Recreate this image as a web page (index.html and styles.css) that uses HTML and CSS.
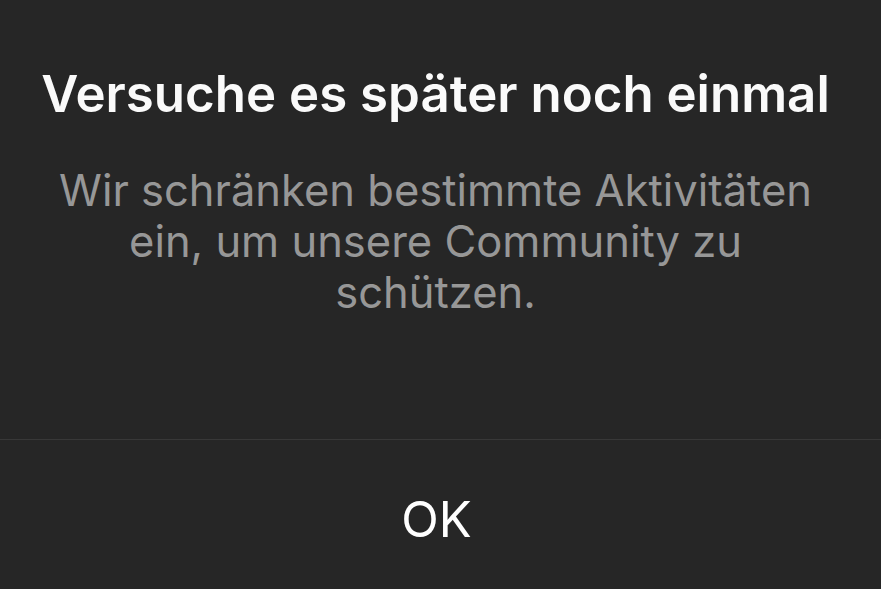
FILE: index.html
```html
<!DOCTYPE html>
<html lang="de">
<head>
    <meta charset="UTF-8">
    <meta name="viewport" content="width=device-width, initial-scale=1.0">
    <title>Hinweis</title>
    <link rel="stylesheet" href="styles.css">
</head>
<body>
    <div class="dialog">
        <div class="dialog-content">
            <h2 class="dialog-title">Versuche es später noch einmal</h2>
            <p class="dialog-message">Wir schränken bestimmte Aktivitäten ein, um unsere Community zu schützen.</p>
        </div>
        <div class="dialog-actions">
            <button class="dialog-btn">OK</button>
        </div>
    </div>
</body>
</html>
```

FILE: styles.css
```css
* {
    margin: 0;
    padding: 0;
    box-sizing: border-box;
    font-family: Inter, 'Noto Sans', sans-serif;
}

html, body {
    height: 100%;
    background: #262626;
}

.dialog {
    height: 100%;
    display: flex;
    flex-direction: column;
    background: #262626;
}

.dialog-content {
    flex: 0 0 440px;
    padding: 65px 45px 0 35px;
    text-align: center;
    border-bottom: 1px solid #383838;
}

.dialog-title {
    color: #fafafa;
    font-size: 51px;
    font-weight: 600;
    line-height: 58px;
    white-space: nowrap;
}

.dialog-message {
    margin-top: 42px;
    padding: 0 10px;
    color: #979797;
    font-size: 43.5px;
    line-height: 51px;
}

.dialog-actions {
    flex: 1;
    display: flex;
    align-items: center;
    justify-content: center;
    padding-top: 10px;
    padding-right: 8px;
}

.dialog-btn {
    background: none;
    border: none;
    color: #ffffff;
    font-size: 49px;
    font-weight: 400;
    cursor: pointer;
}
```
